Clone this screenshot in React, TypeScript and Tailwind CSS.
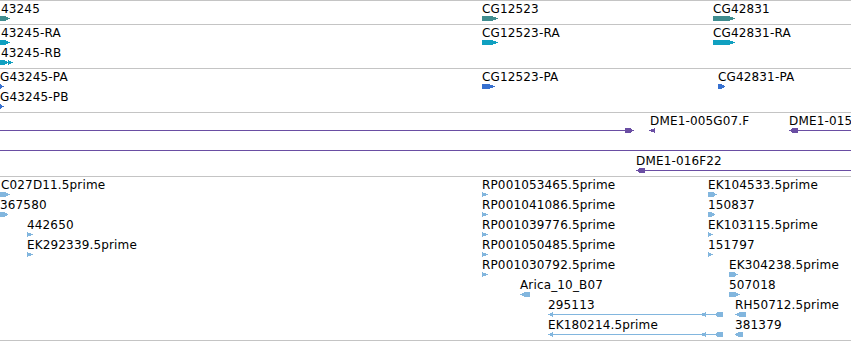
import React from 'react';

type Shape =
  | { t: 'arrow'; x1: number; x2: number; row: number; dir: 'r' | 'l' }
  | { t: 'line'; x1: number; x2: number; row: number };

interface Label {
  x: number;
  row: number;
  text: string;
}

interface TrackDef {
  height: number;
  color: string;
  labels: Label[];
  shapes: Shape[];
  last?: boolean;
}

const arrowPoints = (x1: number, x2: number, cy: number, dir: 'r' | 'l') => {
  const w = x2 - x1;
  const h = 2.5;
  if (w <= 6) {
    return dir === 'r'
      ? `${x1},${cy - h} ${x2},${cy} ${x1},${cy + h}`
      : `${x2},${cy - h} ${x1},${cy} ${x2},${cy + h}`;
  }
  const tip = Math.min(6, w * 0.45);
  return dir === 'r'
    ? `${x1},${cy - h} ${x2 - tip},${cy - h} ${x2},${cy} ${x2 - tip},${cy + h} ${x1},${cy + h}`
    : `${x2},${cy - h} ${x1 + tip},${cy - h} ${x1},${cy} ${x1 + tip},${cy + h} ${x2},${cy + h}`;
};

const rowLabelTop = (row: number) => 2 + row * 20;
const rowGlyphY = (row: number) => 17.5 + row * 20;

const tracks: TrackDef[] = [
  {
    height: 24,
    color: '#3f8d8f',
    labels: [
      { x: 1, row: 0, text: '43245' },
      { x: 482, row: 0, text: 'CG12523' },
      { x: 713, row: 0, text: 'CG42831' },
    ],
    shapes: [
      { t: 'arrow', x1: 0, x2: 10, row: 0, dir: 'r' },
      { t: 'arrow', x1: 482, x2: 498, row: 0, dir: 'r' },
      { t: 'arrow', x1: 713, x2: 735, row: 0, dir: 'r' },
    ],
  },
  {
    height: 44,
    color: '#10a0c0',
    labels: [
      { x: 1, row: 0, text: '43245-RA' },
      { x: 1, row: 1, text: '43245-RB' },
      { x: 482, row: 0, text: 'CG12523-RA' },
      { x: 713, row: 0, text: 'CG42831-RA' },
    ],
    shapes: [
      { t: 'arrow', x1: 0, x2: 10, row: 0, dir: 'r' },
      { t: 'arrow', x1: 0, x2: 8, row: 1, dir: 'r' },
      { t: 'arrow', x1: 8, x2: 13, row: 1, dir: 'r' },
      { t: 'arrow', x1: 482, x2: 498, row: 0, dir: 'r' },
      { t: 'arrow', x1: 713, x2: 735, row: 0, dir: 'r' },
    ],
  },
  {
    height: 44,
    color: '#3670d0',
    labels: [
      { x: 0, row: 0, text: 'G43245-PA' },
      { x: 0, row: 1, text: 'G43245-PB' },
      { x: 482, row: 0, text: 'CG12523-PA' },
      { x: 718, row: 0, text: 'CG42831-PA' },
    ],
    shapes: [
      { t: 'arrow', x1: 0, x2: 4, row: 0, dir: 'r' },
      { t: 'arrow', x1: 0, x2: 4, row: 1, dir: 'r' },
      { t: 'arrow', x1: 482, x2: 495, row: 0, dir: 'r' },
      { t: 'arrow', x1: 718, x2: 725, row: 0, dir: 'r' },
    ],
  },
  {
    height: 64,
    color: '#6a4ea3',
    labels: [
      { x: 650, row: 0, text: 'DME1-005G07.F' },
      { x: 789, row: 0, text: 'DME1-015' },
      { x: 636, row: 2, text: 'DME1-016F22' },
    ],
    shapes: [
      { t: 'line', x1: 0, x2: 628, row: 0 },
      { t: 'arrow', x1: 625, x2: 634, row: 0, dir: 'r' },
      { t: 'arrow', x1: 649, x2: 655, row: 0, dir: 'l' },
      { t: 'arrow', x1: 789, x2: 798, row: 0, dir: 'l' },
      { t: 'line', x1: 795, x2: 851, row: 0 },
      { t: 'line', x1: 0, x2: 851, row: 1 },
      { t: 'arrow', x1: 636, x2: 645, row: 2, dir: 'l' },
      { t: 'line', x1: 642, x2: 851, row: 2 },
    ],
  },
  {
    height: 165,
    color: '#82b6de',
    last: true,
    labels: [
      { x: 1, row: 0, text: 'C027D11.5prime' },
      { x: 0, row: 1, text: '367580' },
      { x: 27, row: 2, text: '442650' },
      { x: 27, row: 3, text: 'EK292339.5prime' },
      { x: 482, row: 0, text: 'RP001053465.5prime' },
      { x: 482, row: 1, text: 'RP001041086.5prime' },
      { x: 482, row: 2, text: 'RP001039776.5prime' },
      { x: 482, row: 3, text: 'RP001050485.5prime' },
      { x: 482, row: 4, text: 'RP001030792.5prime' },
      { x: 520, row: 5, text: 'Arica_10_B07' },
      { x: 548, row: 6, text: '295113' },
      { x: 548, row: 7, text: 'EK180214.5prime' },
      { x: 708, row: 0, text: 'EK104533.5prime' },
      { x: 708, row: 1, text: '150837' },
      { x: 708, row: 2, text: 'EK103115.5prime' },
      { x: 708, row: 3, text: '151797' },
      { x: 729, row: 4, text: 'EK304238.5prime' },
      { x: 729, row: 5, text: '507018' },
      { x: 735, row: 6, text: 'RH50712.5prime' },
      { x: 735, row: 7, text: '381379' },
    ],
    shapes: [
      { t: 'arrow', x1: 0, x2: 10, row: 0, dir: 'r' },
      { t: 'arrow', x1: 0, x2: 8, row: 1, dir: 'r' },
      { t: 'arrow', x1: 27, x2: 33, row: 2, dir: 'r' },
      { t: 'arrow', x1: 27, x2: 33, row: 3, dir: 'r' },
      { t: 'arrow', x1: 482, x2: 488, row: 0, dir: 'r' },
      { t: 'arrow', x1: 482, x2: 488, row: 1, dir: 'r' },
      { t: 'arrow', x1: 482, x2: 488, row: 2, dir: 'r' },
      { t: 'arrow', x1: 482, x2: 488, row: 3, dir: 'r' },
      { t: 'arrow', x1: 482, x2: 488, row: 4, dir: 'r' },
      { t: 'arrow', x1: 520, x2: 530, row: 5, dir: 'l' },
      { t: 'line', x1: 550, x2: 723, row: 6 },
      { t: 'arrow', x1: 548, x2: 553, row: 6, dir: 'l' },
      { t: 'arrow', x1: 700, x2: 706, row: 6, dir: 'l' },
      { t: 'arrow', x1: 714, x2: 723, row: 6, dir: 'l' },
      { t: 'line', x1: 550, x2: 723, row: 7 },
      { t: 'arrow', x1: 548, x2: 553, row: 7, dir: 'l' },
      { t: 'arrow', x1: 700, x2: 706, row: 7, dir: 'l' },
      { t: 'arrow', x1: 714, x2: 723, row: 7, dir: 'l' },
      { t: 'arrow', x1: 708, x2: 717, row: 0, dir: 'r' },
      { t: 'arrow', x1: 708, x2: 715, row: 1, dir: 'r' },
      { t: 'arrow', x1: 708, x2: 713, row: 2, dir: 'r' },
      { t: 'arrow', x1: 708, x2: 713, row: 3, dir: 'r' },
      { t: 'arrow', x1: 729, x2: 738, row: 4, dir: 'r' },
      { t: 'arrow', x1: 729, x2: 740, row: 5, dir: 'r' },
      { t: 'arrow', x1: 735, x2: 746, row: 6, dir: 'l' },
      { t: 'arrow', x1: 735, x2: 743, row: 7, dir: 'l' },
    ],
  },
];

const Track: React.FC<{ track: TrackDef }> = ({ track }) => (
  <div
    className={`relative overflow-hidden border-t border-[#c4c4c4] ${track.last ? 'border-b' : ''}`}
    style={{ height: track.height }}
  >
    <svg className="absolute inset-0" width={851} height={track.height} shapeRendering="crispEdges">
      {track.shapes.map((s, i) =>
        s.t === 'line' ? (
          <rect key={i} x={s.x1} y={Math.floor(rowGlyphY(s.row))} width={s.x2 - s.x1} height={1} fill={track.color} />
        ) : (
          <polygon key={i} points={arrowPoints(s.x1, s.x2, rowGlyphY(s.row), s.dir)} fill={track.color} />
        ),
      )}
    </svg>
    {track.labels.map((l, i) => (
      <span
        key={i}
        className="absolute whitespace-nowrap text-[12px] leading-[12px] tracking-[0.15px] text-black"
        style={{ left: l.x, top: rowLabelTop(l.row) }}
      >
        {l.text}
      </span>
    ))}
  </div>
);

export default function App() {
  return (
    <div className="w-[851px] h-[341px] overflow-hidden bg-white font-['DejaVu_Sans',sans-serif]">
      {tracks.map((t, i) => (
        <Track key={i} track={t} />
      ))}
    </div>
  );
}
